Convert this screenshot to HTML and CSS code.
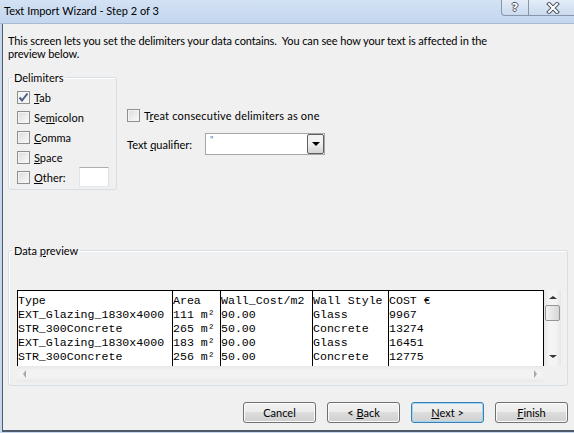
FILE: index.html
```html
<!DOCTYPE html>
<html lang="en">
<head>
    <meta charset="UTF-8">
    <title>Text Import Wizard - Step 2 of 3</title>
    <link rel="stylesheet" href="styles.css">
</head>
<body>
    <div class="titlebar">
        <span class="title">Text Import Wizard - Step 2 of 3</span>
        <div class="caption-buttons">
            <span class="cap-btn help">?</span>
            <span class="cap-btn close">
                <svg width="14" height="12" viewBox="0 0 14 12">
                    <path d="M3 2 L11 10 M11 2 L3 10" stroke="#4b5563" stroke-width="4" stroke-linecap="square"/>
                    <path d="M3 2 L11 10 M11 2 L3 10" stroke="#ffffff" stroke-width="2" stroke-linecap="square"/>
                </svg>
            </span>
        </div>
    </div>

    <div class="window">
        <p class="intro">This screen lets you set the delimiters your data contains.&nbsp; You can see how your text is affected in the<br>preview below.</p>

        <div class="options">
            <fieldset class="group delimiters">
                <legend>Delimiters</legend>
                <label class="check-row"><span class="checkbox checked"><svg width="11" height="11" viewBox="0 0 11 11"><path d="M1.5 5.5 L4 8.5 L9.5 1.5" fill="none" stroke="#4a5d8a" stroke-width="2"/></svg></span><span><u>T</u>ab</span></label>
                <label class="check-row"><span class="checkbox"></span><span>Se<u>m</u>icolon</span></label>
                <label class="check-row"><span class="checkbox"></span><span><u>C</u>omma</span></label>
                <label class="check-row"><span class="checkbox"></span><span><u>S</u>pace</span></label>
                <label class="check-row"><span class="checkbox"></span><span><u>O</u>ther:</span><span class="textbox"></span></label>
            </fieldset>

            <div class="side">
                <label class="check-row"><span class="checkbox"></span><span>T<u>r</u>eat consecutive delimiters as one</span></label>
                <div class="qualifier-row">
                    <span class="qualifier-label">Text <u>q</u>ualifier:</span>
                    <div class="combo">
                        <span class="combo-value">"</span>
                        <span class="combo-arrow"></span>
                    </div>
                </div>
            </div>
        </div>

        <fieldset class="group preview">
            <legend>Data <u>p</u>review</legend>
            <div class="grid">
                <div class="data">
                    <div class="col c1">Type
EXT_Glazing_1830x4000
STR_300Concrete
EXT_Glazing_1830x4000
STR_300Concrete</div>
                    <div class="col c2">Area
111 m²
265 m²
183 m²
256 m²</div>
                    <div class="col c3">Wall_Cost/m2
90.00
50.00
90.00
50.00</div>
                    <div class="col c4">Wall Style
Glass
Concrete
Glass
Concrete</div>
                    <div class="col c5">COST €
9967
13274
16451
12775</div>
                </div>
                <div class="vscroll">
                    <span class="arrow up"></span>
                    <span class="thumb"></span>
                    <span class="arrow down"></span>
                </div>
            </div>
            <div class="hscroll-row">
                <div class="hscroll">
                    <span class="arrow left"></span>
                    <span class="arrow right"></span>
                </div>
                <div class="corner"></div>
            </div>
        </fieldset>

        <div class="buttons">
            <button class="btn">Cancel</button>
            <button class="btn">&lt; <u>B</u>ack</button>
            <button class="btn default"><u>N</u>ext &gt;</button>
            <button class="btn"><u>F</u>inish</button>
        </div>
    </div>
</body>
</html>
```

FILE: styles.css
```css
body {
    margin: 0;
    width: 574px;
    height: 433px;
    overflow: hidden;
    background-color: #c7d8ec;
    font-family: Lato, "Noto Sans", sans-serif;
    font-size: 11px;
    color: #000;
}

/* title bar */
.titlebar {
    height: 23px;
    display: flex;
    align-items: flex-start;
    background: linear-gradient(#d3e2f4, #c3d6ee);
    border-bottom: 1px solid #a7bad2;
}

.title {
    padding: 4px 0 0 4px;
    line-height: 14px;
}

.caption-buttons {
    display: flex;
    margin-left: auto;
    margin-right: -4px;
}

.cap-btn {
    height: 15px;
    display: flex;
    justify-content: center;
    align-items: center;
    border: 1px solid #8796ab;
    border-top: none;
    background: linear-gradient(#e4edf8, #cbdaee);
}

.help {
    width: 26px;
    border-radius: 0 0 0 4px;
    font-family: "DejaVu Sans", sans-serif;
    font-weight: bold;
    font-size: 11px;
    color: #fff;
    text-shadow: 1px 0 #4b5563, -1px 0 #4b5563, 0 1px #4b5563, 0 -1px #4b5563;
}

.close {
    width: 48px;
    border-left: none;
}

/* dialog body */
.window {
    margin-left: 2px;
    height: 406px;
    background-color: #f0f0f0;
    border-left: 1px solid #4d5b6c;
    border-bottom: 2px solid #4d5b6c;
}

.intro {
    margin: 0;
    padding: 10px 0 0 5px;
    line-height: 13px;
    letter-spacing: -0.1px;
}

.options {
    display: flex;
    align-items: flex-start;
    margin: 10px 0 0 5px;
}

.group {
    margin: 0;
    border: 1px solid #d5dfe5;
    border-radius: 3px;
    box-shadow: inset 1px 1px 0 #fff;
}

.group legend {
    padding: 0 2px;
    margin-left: -5px;
    line-height: 15px;
}

.delimiters {
    width: 109px;
    box-sizing: border-box;
    padding: 2px 7px 2px 8px;
}

.check-row {
    display: flex;
    align-items: center;
    height: 20px;
}

.checkbox {
    width: 11px;
    height: 11px;
    margin-right: 4px;
    flex-shrink: 0;
    display: flex;
    border: 1px solid #8e8f8f;
    background: linear-gradient(135deg, #dcdcdc, #fbfbfb);
    box-shadow: inset 0 0 0 1px #f4f4f4;
}

.checked {
    background: #f4f4f4;
}

.textbox {
    width: 28px;
    height: 18px;
    margin-left: auto;
    background: #fff;
    border: 1px solid #abadb3;
    border-color: #abadb3 #dbdfe6 #e3e9ef #e2e3ea;
}

.side {
    margin-left: 10px;
    padding-top: 35px;
}

.side .check-row {
    letter-spacing: 0.2px;
}

.qualifier-row {
    display: flex;
    align-items: center;
    margin-top: 8px;
}

.qualifier-label {
    width: 78px;
}

.combo {
    width: 118px;
    height: 20px;
    display: flex;
    background: #fff;
    border: 1px solid #a6a6a6;
}

.combo-value {
    flex: 1;
    padding-left: 4px;
    font-size: 9px;
    line-height: 12px;
    color: #3a6fd0;
}

.combo-arrow {
    width: 15px;
    height: 18px;
    border: 1px solid #5e5e5e;
    border-radius: 2px;
    background: linear-gradient(#f2f2f2 45%, #d4d4d4);
    position: relative;
}

.combo-arrow::after {
    content: "";
    position: absolute;
    left: 4px;
    top: 7px;
    border: 4px solid transparent;
    border-top: 4px solid #000;
    border-bottom: none;
}

/* data preview */
.preview {
    width: 559px;
    box-sizing: border-box;
    margin: 53px 0 0 5px;
    padding: 32px 6px 3px 8px;
}

.grid {
    display: flex;
    height: 76px;
}

.data {
    width: 526px;
    display: flex;
    overflow: hidden;
    background: #fff;
    border-top: 1px solid #000;
    border-right: 1px solid #000;
}

.col {
    flex-shrink: 0;
    white-space: pre;
    border-left: 1px solid #000;
    padding-top: 3px;
    font-family: "Liberation Mono", monospace;
    font-size: 11.6px;
    line-height: 14px;
    color: #000;
}

.c1 { width: 154px; }
.c2 { width: 47px; }
.c3 { width: 91px; }
.c4 { width: 75px; }
.c5 { flex: 1; }

.vscroll {
    width: 17px;
    display: flex;
    flex-direction: column;
    align-items: center;
    background: linear-gradient(90deg, #e6e6e6, #f4f4f4 30%, #f4f4f4 70%, #e6e6e6);
}

.arrow {
    width: 0;
    height: 0;
    border: 4px solid transparent;
}

.up {
    margin-top: 6px;
    border-top: none;
    border-bottom: 3px solid #333;
}

.down {
    margin-top: auto;
    margin-bottom: 8px;
    border-bottom: none;
    border-top: 3px solid #333;
}

.thumb {
    width: 13px;
    height: 14px;
    margin-top: 6px;
    border: 1px solid #959595;
    border-radius: 2px;
    background: linear-gradient(90deg, #f3f3f3, #e6e6e6 50%, #d6d6d6);
}

.hscroll-row {
    display: flex;
    height: 16px;
}

.hscroll {
    width: 526px;
    display: flex;
    align-items: center;
    justify-content: space-between;
    padding: 0 6px 0 6px;
    box-sizing: border-box;
    background: linear-gradient(#e8e8e8, #f3f3f3 30%, #f3f3f3 70%, #e8e8e8);
}

.left {
    border-left: none;
    border-right: 3px solid #a8a8a8;
}

.right {
    border-right: none;
    border-left: 3px solid #a8a8a8;
}

.corner {
    width: 17px;
    background: #f0f0f0;
}

/* bottom buttons */
.buttons {
    display: flex;
    justify-content: flex-end;
    gap: 11px;
    margin-top: 16px;
    padding-right: 6px;
}

.btn {
    width: 73px;
    height: 21px;
    padding: 0;
    font-family: Lato, "Noto Sans", sans-serif;
    font-size: 11px;
    color: #000;
    border: 1px solid #707070;
    border-radius: 3px;
    background: linear-gradient(#f2f2f2 0%, #ebebeb 49%, #dddddd 50%, #cfcfcf 100%);
    box-shadow: inset 0 0 0 1px #fbfbfb;
}

.btn.default {
    border-color: #3c7fb1;
    box-shadow: inset 0 0 0 1px #9fd6f4;
}
```
